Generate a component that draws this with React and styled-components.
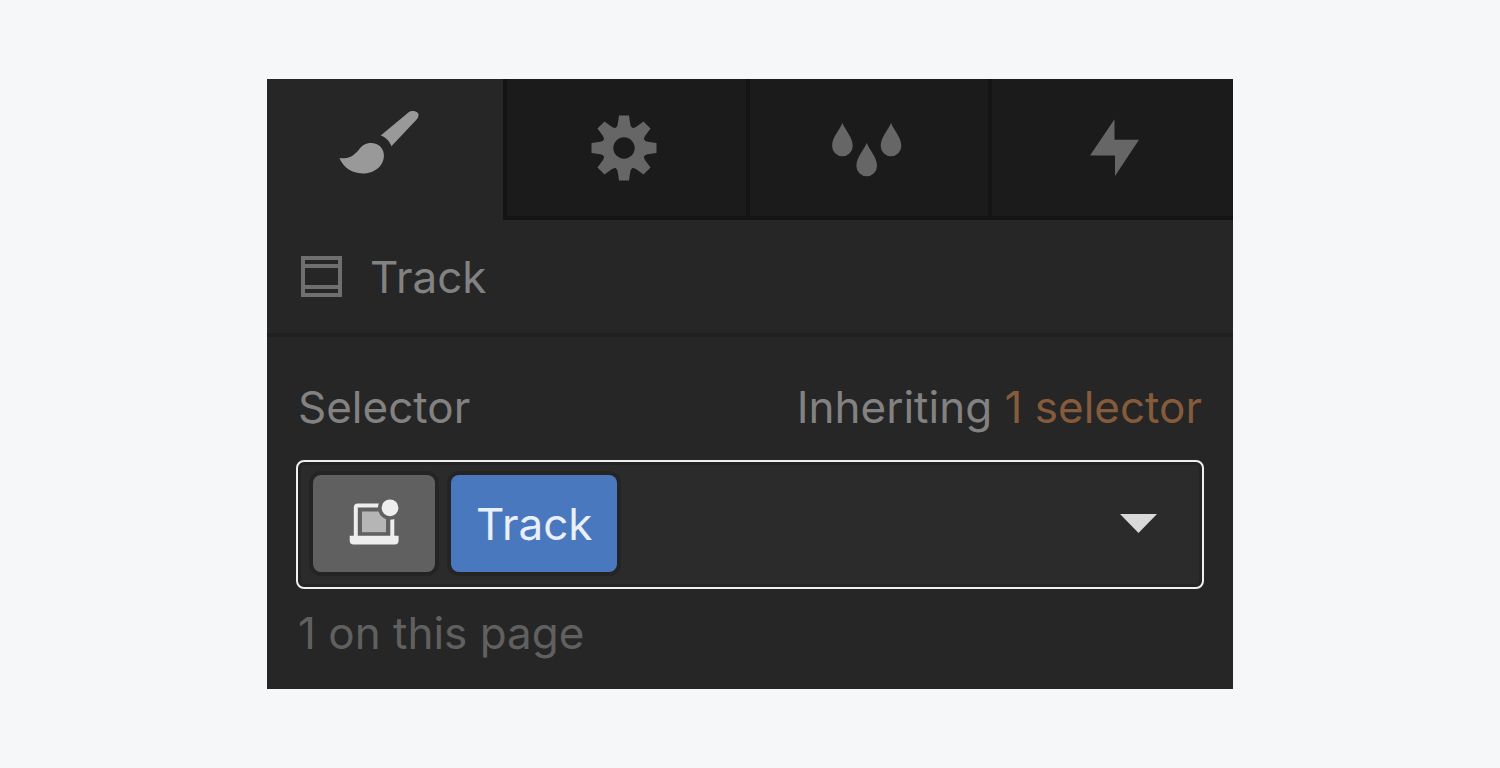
import { useState } from 'react'
import styled, { createGlobalStyle } from 'styled-components'

const BrushIcon = () => (
  <TabIcon viewBox="0 0 96 80" aria-hidden="true">
    <path d="M43.7 27.6 L71.4 4.4 C75.6 1.4 83.4 3.6 81.2 9 C80.8 10.2 80.2 10.8 79.4 11.8 L54.4 38.3 C52.4 33.2 49.2 29.6 43.7 27.6 Z" />
    <path d="M2.4 50 C12 51.2 17.2 47.4 22 41.4 C25.2 37.4 28.6 35 34 35 C41.6 35 46.9 40.4 46.9 47.4 C46.9 57.8 37.6 65.4 25.4 65.4 C15 65.4 6 59.4 2.4 50 Z" />
  </TabIcon>
)

const GearIcon = () => (
  <TabIcon viewBox="0 0 96 80" aria-hidden="true">
    <circle cx="48" cy="40" r="16.2" fill="none" stroke="currentColor" strokeWidth="11" />
    {[0, 45, 90, 135, 180, 225, 270, 315].map(angle => (
      <path
        key={angle}
        d="M39 20.5 C41.4 19 41.6 17 42 14.5 L43 7.5 H53 L54 14.5 C54.4 17 54.6 19 57 20.5 L54 24 H42 Z"
        transform={`rotate(${angle} 48 40)`}
      />
    ))}
  </TabIcon>
)

const dropPath = 'c3.4 8.4 10.3 14 10.3 23 a10.3 10.3 0 0 1 -20.6 0 c0 -9 6.9 -14.6 10.3 -23 z'

const DropsIcon = () => (
  <TabIcon viewBox="0 0 96 80" aria-hidden="true">
    <path d={`M23.4 15 ${dropPath}`} />
    <path d={`M47.7 35 ${dropPath}`} />
    <path d={`M72 15 ${dropPath}`} />
  </TabIcon>
)

const BoltIcon = () => (
  <TabIcon viewBox="0 0 96 80" aria-hidden="true">
    <path d="M51.5 11.3 V31.8 H76 L52 68 V47.6 H27 Z" />
  </TabIcon>
)

const SectionIcon = () => (
  <svg width="41" height="41" viewBox="0 0 41 41" fill="none" stroke="#6f6f6f" strokeWidth="4" aria-hidden="true">
    <rect x="2" y="2" width="37" height="37" />
    <path d="M2 10 H39 M2 31 H39" />
  </svg>
)

const BreakpointIcon = () => (
  <svg width="50" height="50" viewBox="0 0 50 50" aria-hidden="true">
    <path d="M6.8 38 V8.5 Q6.8 6.6 8.8 6.6 H43.3 V38" fill="none" stroke="#eeeeee" strokeWidth="4" />
    <rect x="13" y="12.5" width="24" height="20.7" fill="#b5b5b5" />
    <path d="M0.7 36.8 H49.6 V41.5 Q49.6 45.5 45.6 45.5 H4.7 Q0.7 45.5 0.7 41.5 Z" fill="#eeeeee" />
    <circle cx="41" cy="8.8" r="12" fill="#606060" />
    <circle cx="41" cy="8.8" r="8.4" fill="#eeeeee" />
  </svg>
)

const tabs = [
  { name: 'Style', Icon: BrushIcon },
  { name: 'Settings', Icon: GearIcon },
  { name: 'Style manager', Icon: DropsIcon },
  { name: 'Interactions', Icon: BoltIcon },
]

const App = () => {
  const [activeTab, setActiveTab] = useState('Style')

  return (
    <Page>
      <GlobalStyle />
      <Panel>
        <Tabs role="tablist">
          {tabs.map(({ name, Icon }) => (
            <Tab
              key={name}
              type="button"
              role="tab"
              aria-label={name}
              aria-selected={name === activeTab}
              $active={name === activeTab}
              onClick={() => setActiveTab(name)}
            >
              <Icon />
            </Tab>
          ))}
        </Tabs>
        <ElementHeader>
          <SectionIcon />
          <ElementName>Track</ElementName>
        </ElementHeader>
        <SelectorSection>
          <LabelRow>
            <label htmlFor="selector">Selector</label>
            <span>
              Inheriting <InheritButton type="button">1 selector</InheritButton>
            </span>
          </LabelRow>
          <SelectorBox>
            <StateChip type="button" aria-label="Base breakpoint">
              <BreakpointIcon />
            </StateChip>
            <ClassChip type="button">Track</ClassChip>
            <SelectorInput id="selector" type="text" />
            <CaretButton type="button" aria-label="Show classes">
              <svg width="37" height="19" viewBox="0 0 37 19" aria-hidden="true">
                <path d="M0 0 H37 L18.5 19 Z" fill="#d9d9d9" />
              </svg>
            </CaretButton>
          </SelectorBox>
          <Usage>1 on this page</Usage>
        </SelectorSection>
      </Panel>
    </Page>
  )
}

const GlobalStyle = createGlobalStyle`
  * {
    box-sizing: border-box;
  }

  body {
    margin: 0;
    background-color: #f6f7f9;
  }

  button, input {
    margin: 0;
    padding: 0;
    border: 0;
    background: none;
    color: inherit;
    font: inherit;
  }

  button {
    cursor: pointer;
  }

  svg {
    display: block;
  }
`

const Page = styled.main`
  padding: 79px 17.8%;

  font-family: Inter, "Liberation Sans", sans-serif;
  font-size: 44px;
  line-height: 54px;
`

const Panel = styled.section`
  background-color: #262626;
  color: #828282;
`

const Tabs = styled.div`
  display: grid;
  grid-template-columns: 236fr 243fr 242fr 245fr;
`

const Tab = styled.button`
  display: flex;
  align-items: center;
  justify-content: center;

  height: 141px;
  padding-bottom: 4px;
  background-color: ${props => props.$active ? '#262626' : '#1b1b1b'};
  box-shadow: ${props => props.$active ? 'none' : 'inset 4px -4px 0 #141414'};
  color: ${props => props.$active ? '#999999' : '#666666'};
`

const TabIcon = styled.svg`
  width: 96px;
  height: 80px;
  fill: currentColor;
`

const ElementHeader = styled.header`
  display: flex;
  align-items: center;
  gap: 28px;

  height: 117px;
  padding: 0 34px;
  border-bottom: 4px solid #202020;
`

const ElementName = styled.h1`
  margin: 0;

  font-size: inherit;
  font-weight: 400;
`

const SelectorSection = styled.div`
  padding: 43px 29px 29px;
`

const LabelRow = styled.div`
  display: flex;
  justify-content: space-between;

  margin-bottom: 26px;
  padding: 0 2px;
`

const InheritButton = styled.button`
  color: #855b3b;
`

const SelectorBox = styled.div`
  display: flex;
  align-items: center;
  gap: 16px;

  padding: 13px 15px 15px;
  border: 2px solid #f0f0f0;
  border-radius: 8px;
  background-color: #2b2b2b;
  box-shadow: inset 0 0 0 3px #242424;
`

const Chip = styled.button`
  display: flex;
  align-items: center;
  justify-content: center;

  height: 97px;
  border-radius: 8px;
  box-shadow: 0 0 0 4px #242424;
`

const StateChip = styled(Chip)`
  width: 122px;
  background-color: #606060;
`

const ClassChip = styled(Chip)`
  padding: 0 25px;
  background-color: #4a78be;
  color: #e9f0fb;
`

const SelectorInput = styled.input`
  flex: 1;

  min-width: 0;
  outline: none;
`

const CaretButton = styled.button`
  padding: 24px 30px;
`

const Usage = styled.p`
  margin: 17px 0 0;
  padding: 0 2px;

  color: #606060;
`

export default App
